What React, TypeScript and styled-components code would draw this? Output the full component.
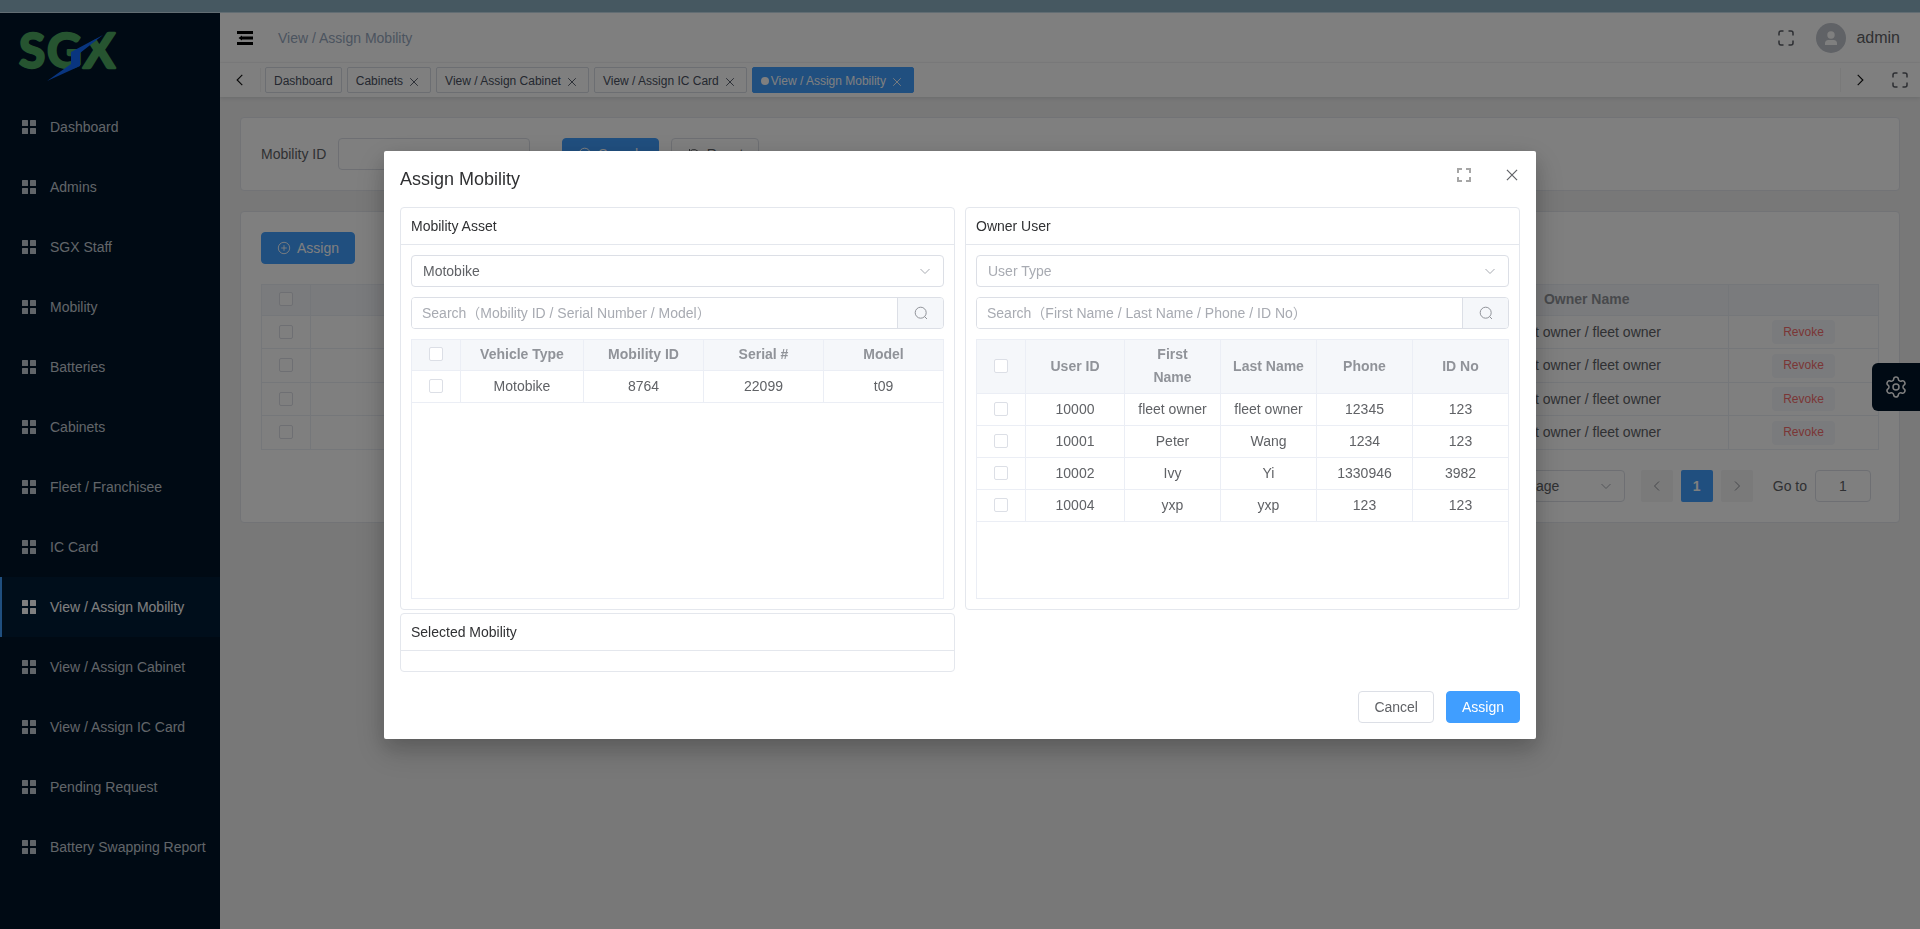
import React from 'react';
import styled, { createGlobalStyle, css } from 'styled-components';
import { Settings } from 'lucide-react';

const color = {
  primary: '#409eff',
  danger: '#f56c6c',
  title: '#303133',
  text: '#606266',
  muted: '#909399',
  placeholder: '#a8abb2',
  border: '#dcdfe6',
  line: '#ebeef5',
  fill: '#f5f7fa',
  page: '#f0f0f0',
  navy: '#001529',
};

const GlobalStyle = createGlobalStyle`
  *, *::before, *::after { box-sizing: border-box; }
  body {
    margin: 0;
    color: ${color.text};
    background: ${color.page};
    font-family: "Liberation Sans", "Noto Sans CJK SC", sans-serif;
    font-size: 14px;
  }
  button, input, select { font: inherit; color: inherit; }
  button { cursor: pointer; }
`;

/* ---------- Shell ---------- */

const Shell = styled.div`
  display: flex;
  flex-direction: column;
  min-height: 100vh;
`;

const TopStrip = styled.div`
  height: 13px;
  background: #8cb0c2;
  border-bottom: 1px solid #c4dbe6;
`;

const Body = styled.div`
  display: flex;
  flex: 1;
`;

const Sidebar = styled.aside`
  flex: 0 0 220px;
  background: ${color.navy};
`;

const LogoLink = styled.a`
  display: block;
  height: 84px;
  padding: 3px 0 0 15px;
`;

const NavLink = styled.a<{ $active?: boolean }>`
  display: flex;
  align-items: center;
  gap: 14px;
  height: 60px;
  padding-left: 20px;
  border-left: 2px solid ${(p) => (p.$active ? color.primary : 'transparent')};
  background: ${(p) => (p.$active ? '#011c37' : 'transparent')};
  color: ${(p) => (p.$active ? '#fff' : '#c3cad2')};
  text-decoration: none;
  white-space: nowrap;
`;

const Main = styled.div`
  display: flex;
  flex: 1;
  flex-direction: column;
  min-width: 0;
`;

const IconButton = styled.button<{ $size?: number }>`
  display: flex;
  align-items: center;
  justify-content: center;
  width: ${(p) => p.$size ?? 16}px;
  height: ${(p) => p.$size ?? 16}px;
  padding: 0;
  border: 0;
  background: none;
`;

const HeaderBar = styled.header`
  display: flex;
  align-items: center;
  height: 50px;
  padding: 0 20px 0 17px;
  border-bottom: 1px solid #f8f8f8;
  background: #fff;
`;

const Crumb = styled.span`
  flex: 1;
  margin-left: 25px;
  color: #97a8be;
`;

const Avatar = styled.span`
  display: flex;
  align-items: center;
  justify-content: center;
  width: 30px;
  height: 30px;
  margin: 0 10px 0 22px;
  border-radius: 50%;
  background: #c0c4cc;
`;

const UserName = styled.span`
  font-size: 16px;
`;

const TabBar = styled.nav`
  display: flex;
  align-items: center;
  height: 34px;
  background: #fff;
  box-shadow: 0 1px 4px rgba(0, 21, 41, 0.12);
`;

const TabEdge = styled.div<{ $side: 'left' | 'right' }>`
  display: flex;
  align-items: center;
  justify-content: space-between;
  height: 24px;
  ${(p) =>
    p.$side === 'left'
      ? 'width: 41px; padding-left: 12px; border-right: 1px solid #f2f2f2;'
      : 'width: 80px; padding: 0 12px 0 11px; border-left: 1px solid #f2f2f2;'}
`;

const TabList = styled.div`
  display: flex;
  flex: 1;
  gap: 5px;
  padding-left: 4px;
`;

const Tab = styled.a<{ $active?: boolean }>`
  display: flex;
  align-items: center;
  height: 26px;
  padding: 1px 8px 0;
  border: 1px solid ${(p) => (p.$active ? color.primary : '#d8dce5')};
  border-radius: 2px;
  background: ${(p) => (p.$active ? color.primary : '#fff')};
  color: ${(p) => (p.$active ? '#fff' : '#495060')};
  font-size: 12px;
  text-decoration: none;
  white-space: nowrap;
  svg { margin: 3px 2px 0 5px; }
`;

const TabDot = styled.span`
  width: 8px;
  height: 8px;
  margin-right: 2px;
  border-radius: 50%;
  background: #fff;
`;

const Content = styled.main`
  display: flex;
  flex-direction: column;
  gap: 20px;
  padding: 20px;
`;

const Card = styled.section`
  padding: 20px;
  border: 1px solid #e4e7ed;
  border-radius: 4px;
  background: #fff;
`;

/* ---------- Controls ---------- */

const Button = styled.button<{ $kind?: 'primary' | 'plain' }>`
  display: inline-flex;
  align-items: center;
  justify-content: center;
  gap: 6px;
  height: 32px;
  padding: 0 15px;
  border: 1px solid ${(p) => (p.$kind === 'primary' ? color.primary : color.border)};
  border-radius: 4px;
  background: ${(p) => (p.$kind === 'primary' ? color.primary : '#fff')};
  color: ${(p) => (p.$kind === 'primary' ? '#fff' : color.text)};
`;

const RevokeButton = styled.button`
  height: 24px;
  padding: 0 11px;
  border: 0;
  border-radius: 4px;
  background: ${color.fill};
  color: ${color.danger};
  font-size: 12px;
  vertical-align: middle;
`;

const fieldStyle = css`
  height: 32px;
  border: 1px solid ${color.border};
  border-radius: 4px;
  background: #fff;
  outline: none;
`;

const TextInput = styled.input<{ $width: number; $center?: boolean }>`
  ${fieldStyle}
  width: ${(p) => p.$width}px;
  padding: 0 11px;
  text-align: ${(p) => (p.$center ? 'center' : 'left')};
`;

const SelectBox = styled.div<{ $width?: number }>`
  position: relative;
  width: ${(p) => (p.$width ? `${p.$width}px` : '100%')};
  svg {
    position: absolute;
    top: 9px;
    right: 12px;
    pointer-events: none;
  }
`;

const Select = styled.select<{ $empty?: boolean }>`
  ${fieldStyle}
  appearance: none;
  display: block;
  width: 100%;
  padding: 0 11px;
  color: ${(p) => (p.$empty ? color.placeholder : color.text)};
`;

const SearchGroup = styled.div`
  display: flex;
  height: 32px;
  border: 1px solid ${color.border};
  border-radius: 4px;
  overflow: hidden;
`;

const SearchInput = styled.input`
  flex: 1;
  min-width: 0;
  padding: 0 10px;
  border: 0;
  outline: none;
  &::placeholder { color: ${color.placeholder}; opacity: 1; }
`;

const SearchButton = styled.button`
  display: flex;
  align-items: center;
  justify-content: center;
  width: 46px;
  padding: 0;
  border: 0;
  border-left: 1px solid ${color.border};
  background: ${color.fill};
`;

const Checkbox = styled.input.attrs({ type: 'checkbox' })`
  appearance: none;
  display: block;
  width: 14px;
  height: 14px;
  margin: 0 auto 1px;
  border: 1px solid ${color.border};
  border-radius: 2px;
  background: #fff;
  &:checked { background: ${color.primary}; }
`;

/* ---------- Table ---------- */

const TableFrame = styled.div<{ $height?: number }>`
  border: 1px solid ${color.line};
  ${(p) => (p.$height ? `height: ${p.$height}px;` : 'border-bottom: 0;')}
`;

const Table = styled.table<{ $head?: number; $airy?: boolean }>`
  width: 100%;
  table-layout: fixed;
  border-collapse: separate;
  border-spacing: 0;
  line-height: 23px;
  text-align: center;
  th, td {
    padding: 0 12px;
    border-right: 1px solid ${color.line};
    border-bottom: 1px solid ${color.line};
  }
  th { padding-bottom: 1px; }
  th:last-child, td:last-child { border-right: 0; }
  th:first-child, td:first-child { padding-left: 0; padding-right: 0; }
  th {
    height: ${(p) => p.$head ?? 31}px;
    background: ${color.fill};
    color: ${color.muted};
    font-weight: 700;
  }
  td { height: ${(p) => (p.$airy ? 33 : 32)}px; }
  tr:nth-child(even) td { height: ${(p) => (p.$airy ? 34 : 32)}px; }
`;

interface DataTableProps {
  name: string;
  columns: string[];
  widths: (number | undefined)[];
  rows: React.ReactNode[][];
  head?: number;
  airy?: boolean;
}

const DataTable = ({ name, columns, widths, rows, head, airy }: DataTableProps) => (
  <Table $head={head} $airy={airy} aria-label={name}>
    <colgroup>
      <col width={49} />
      {widths.map((w, i) => (
        <col key={i} width={w} />
      ))}
    </colgroup>
    <thead>
      <tr>
        <th>
          <Checkbox aria-label="Select all" />
        </th>
        {columns.map((c, i) => (
          <th key={i}>{c}</th>
        ))}
      </tr>
    </thead>
    <tbody>
      {rows.map((row, r) => (
        <tr key={r}>
          <td>
            <Checkbox aria-label={`Select row ${r + 1}`} />
          </td>
          {row.map((cell, i) => (
            <td key={i}>{cell}</td>
          ))}
        </tr>
      ))}
    </tbody>
  </Table>
);

/* ---------- Page parts ---------- */

const FilterRow = styled.form`
  display: flex;
  align-items: center;
  label { margin-right: 12px; }
  ${Button} { margin-left: 12px; }
  input + ${Button} { margin-left: 32px; }
`;

const Toolbar = styled.div`
  margin-bottom: 20px;
  line-height: 0;
`;

const Pagination = styled.div`
  display: flex;
  align-items: center;
  justify-content: flex-end;
  gap: 8px;
  padding: 20px 8px 0 0;
  label { margin-left: 12px; }
`;

const Total = styled.span`
  margin-right: 8px;
`;

const PageButton = styled.button<{ $current?: boolean }>`
  display: flex;
  align-items: center;
  justify-content: center;
  width: 32px;
  height: 32px;
  padding: 0;
  border: 0;
  border-radius: 2px;
  background: ${(p) => (p.$current ? color.primary : '#f4f4f5')};
  color: ${(p) => (p.$current ? '#fff' : color.muted)};
  font-weight: 700;
`;

const PageSize = styled.div`
  margin-right: 8px;
`;

const SettingsTab = styled.button`
  position: fixed;
  top: 363px;
  right: 0;
  display: flex;
  align-items: center;
  justify-content: center;
  width: 48px;
  height: 48px;
  padding: 0;
  border: 0;
  border-radius: 6px 0 0 6px;
  background: ${color.navy};
  color: #fff;
`;

/* ---------- Dialog ---------- */

const Overlay = styled.div`
  position: fixed;
  inset: 0;
  display: flex;
  align-items: flex-start;
  justify-content: center;
  padding-top: 151px;
  background: rgba(0, 0, 0, 0.5);
  overflow: auto;
`;

const Dialog = styled.div`
  width: 60%;
  border-radius: 2px;
  background: #fff;
  box-shadow: 0 12px 32px 4px rgba(0, 0, 0, 0.12), 0 8px 20px rgba(0, 0, 0, 0.16);
`;

const DialogHeader = styled.div`
  display: flex;
  height: 56px;
  padding-left: 16px;
`;

const DialogTitle = styled.h2`
  flex: 1;
  margin: 16px 0;
  color: ${color.title};
  font-size: 18px;
  font-weight: 400;
  line-height: 24px;
`;

const PanelGrid = styled.div`
  display: grid;
  grid-template-columns: 1fr 1fr;
  gap: 3px 10px;
  padding: 0 16px;
`;

const Panel = styled.section`
  border: 1px solid #e4e7ed;
  border-radius: 4px;
`;

const PanelTitle = styled.h3`
  margin: 0;
  padding: 0 10px;
  border-bottom: 1px solid #e4e7ed;
  color: ${color.title};
  font-size: 14px;
  font-weight: 400;
  line-height: 36px;
`;

const PanelBody = styled.div`
  display: flex;
  flex-direction: column;
  gap: 10px;
  padding: 10px;
`;

const DialogFooter = styled.div`
  display: flex;
  justify-content: flex-end;
  gap: 12px;
  padding: 19px 16px 16px;
`;

/* ---------- Icons ---------- */

const Logo = () => (
  <svg width="120" height="76" viewBox="15 16 120 76" role="img" aria-label="SGX">
    <g
      fill="#4ca860"
      stroke="#4ca860"
      strokeWidth="2.4"
      strokeLinejoin="round"
      fontFamily="Lato, sans-serif"
      fontWeight="700"
      fontSize="48"
    >
      <text x="19" y="68">S</text>
      <text x="47" y="68">G</text>
      <text x="83" y="68">X</text>
    </g>
    <path d="M81 30h20v6L82 47z" fill={color.navy} />
    <path d="M103 35 71 52v12L47 81l33-15V53z" fill="#126bff" />
  </svg>
);

const GridIcon = () => (
  <svg width="14" height="14" viewBox="0 0 14 14" fill="currentColor">
    <rect width="6" height="6" rx="0.5" />
    <rect x="8" width="6" height="6" rx="0.5" />
    <rect y="8" width="6" height="6" rx="0.5" />
    <rect x="8" y="8" width="6" height="6" rx="0.5" />
  </svg>
);

const FoldIcon = () => (
  <svg width="16" height="14" viewBox="0 0 16 14" fill="#000">
    <path d="M0 0h16v3H0zM5 5.500h11v3H5zM0 11h16v3H0zM1.500 7l3.500-2.500v5z" />
  </svg>
);

const ExpandIcon = () => (
  <svg width="16" height="16" viewBox="0 0 16 16" fill="none" stroke="#5a5e66" strokeWidth="1.5">
    <path d="M1 5.500V3a2 2 0 0 1 2-2h2.500M10.500 1H13a2 2 0 0 1 2 2v2.500M15 10.500V13a2 2 0 0 1-2 2h-2.500M5.500 15H3a2 2 0 0 1-2-2v-2.500" />
  </svg>
);

const SquareExpandIcon = () => (
  <svg width="14" height="14" viewBox="0 0 14 14" fill="none" stroke="#a6a6a6" strokeWidth="2">
    <path d="M1 5V1h4M9 1h4v4M13 9v4H9M5 13H1V9" />
  </svg>
);

const CrossIcon = ({ size = 12 }: { size?: number }) => (
  <svg width={size} height={size} viewBox="0 0 12 12" fill="none" stroke="currentColor" strokeWidth="0.9">
    <path d="M2.200 2.200l7.600 7.600M9.800 2.200l-7.600 7.600" />
  </svg>
);

const Chevron = ({ dir, stroke = 'currentColor', size = 14 }: {
  dir: 'left' | 'right' | 'down';
  stroke?: string;
  size?: number;
}) => {
  const d = { left: 'M9 2.500 4.500 7 9 11.500', right: 'M5 2.500 9.500 7 5 11.500', down: 'M2.500 5 7 9.500 11.500 5' }[dir];
  return (
    <svg width={size} height={size} viewBox="0 0 14 14" fill="none" stroke={stroke}>
      <path d={d} />
    </svg>
  );
};

const SearchIcon = ({ stroke = 'currentColor' }: { stroke?: string }) => (
  <svg width="14" height="14" viewBox="0 0 14 14" fill="none" stroke={stroke}>
    <circle cx="6.700" cy="6.700" r="5.500" />
    <path d="M10.500 10.500 13 13" />
  </svg>
);

const PlusCircleIcon = () => (
  <svg width="14" height="14" viewBox="0 0 14 14" fill="none" stroke="currentColor" strokeWidth="0.9">
    <circle cx="7" cy="7" r="5.700" />
    <path d="M7 4.200v5.600M4.200 7h5.600" />
  </svg>
);

const RefreshIcon = () => (
  <svg width="14" height="14" viewBox="0 0 14 14" fill="none" stroke="currentColor">
    <path d="M2.500 2v3h3M2.800 4.800A5 5 0 0 1 12 7M11.500 12V9h-3M11.200 9.200A5 5 0 0 1 2 7" />
  </svg>
);

const PersonIcon = () => (
  <svg width="14" height="14" viewBox="0 0 14 14" fill="#fff">
    <circle cx="7" cy="4" r="3.700" />
    <path d="M1 14v-1.500A3.500 3.500 0 0 1 4.500 9h5a3.500 3.500 0 0 1 3.500 3.500V14z" />
  </svg>
);

/* ---------- Data ---------- */

const menu = [
  'Dashboard',
  'Admins',
  'SGX Staff',
  'Mobility',
  'Batteries',
  'Cabinets',
  'Fleet / Franchisee',
  'IC Card',
  'View / Assign Mobility',
  'View / Assign Cabinet',
  'View / Assign IC Card',
  'Pending Request',
  'Battery Swapping Report',
];

const currentPage = 'View / Assign Mobility';

const openTabs = ['Dashboard', 'Cabinets', 'View / Assign Cabinet', 'View / Assign IC Card', currentPage];

const assignedRows = [1, 2, 3, 4].map(() => [
  '',
  '',
  '',
  '',
  'fleet owner / fleet owner',
  <RevokeButton key="revoke">Revoke</RevokeButton>,
]);

const users = [
  ['10000', 'fleet owner', 'fleet owner', '12345', '123'],
  ['10001', 'Peter', 'Wang', '1234', '123'],
  ['10002', 'Ivy', 'Yi', '1330946', '3982'],
  ['10004', 'yxp', 'yxp', '123', '123'],
];

/* ---------- App ---------- */

const AssignDialog = () => (
  <Overlay>
    <Dialog role="dialog" aria-modal="true" aria-labelledby="dialog-title">
      <DialogHeader>
        <DialogTitle id="dialog-title">Assign Mobility</DialogTitle>
        <IconButton $size={48} aria-label="Full screen">
          <SquareExpandIcon />
        </IconButton>
        <IconButton $size={48} aria-label="Close">
          <CrossIcon size={16} />
        </IconButton>
      </DialogHeader>
      <PanelGrid>
        <Panel>
          <PanelTitle>Mobility Asset</PanelTitle>
          <PanelBody>
            <SelectBox>
              <Select aria-label="Vehicle type" defaultValue="Motobike">
                <option>Motobike</option>
              </Select>
              <Chevron dir="down" stroke={color.placeholder} />
            </SelectBox>
            <SearchGroup>
              <SearchInput aria-label="Search mobility" placeholder="Search（Mobility ID / Serial Number / Model）" />
              <SearchButton aria-label="Search">
                <SearchIcon stroke={color.muted} />
              </SearchButton>
            </SearchGroup>
            <TableFrame $height={260}>
              <DataTable
                name="Mobility assets"
                columns={['Vehicle Type', 'Mobility ID', 'Serial #', 'Model']}
                widths={[123, 120, 120, undefined]}
                rows={[['Motobike', '8764', '22099', 't09']]}
              />
            </TableFrame>
          </PanelBody>
        </Panel>
        <Panel>
          <PanelTitle>Owner User</PanelTitle>
          <PanelBody>
            <SelectBox>
              <Select aria-label="User type" $empty defaultValue="">
                <option value="">User Type</option>
              </Select>
              <Chevron dir="down" stroke={color.placeholder} />
            </SelectBox>
            <SearchGroup>
              <SearchInput aria-label="Search users" placeholder="Search（First Name / Last Name / Phone / ID No）" />
              <SearchButton aria-label="Search">
                <SearchIcon stroke={color.muted} />
              </SearchButton>
            </SearchGroup>
            <TableFrame $height={260}>
              <DataTable
                name="Owner users"
                columns={['User ID', 'First Name', 'Last Name', 'Phone', 'ID No']}
                widths={[99, 96, 96, 96, undefined]}
                head={54}
                rows={users}
              />
            </TableFrame>
          </PanelBody>
        </Panel>
        <Panel>
          <PanelTitle>Selected Mobility</PanelTitle>
          <PanelBody />
        </Panel>
      </PanelGrid>
      <DialogFooter>
        <Button>Cancel</Button>
        <Button $kind="primary">Assign</Button>
      </DialogFooter>
    </Dialog>
  </Overlay>
);

export default function App() {
  return (
    <>
      <GlobalStyle />
      <Shell>
        <TopStrip />
        <Body>
          <Sidebar>
            <LogoLink href="#home">
              <Logo />
            </LogoLink>
            <nav aria-label="Main menu">
              {menu.map((item) => (
                <NavLink key={item} href="#menu" $active={item === currentPage}>
                  <GridIcon />
                  {item}
                </NavLink>
              ))}
            </nav>
          </Sidebar>
          <Main>
            <HeaderBar>
              <IconButton aria-label="Collapse menu">
                <FoldIcon />
              </IconButton>
              <Crumb>{currentPage}</Crumb>
              <IconButton aria-label="Full screen">
                <ExpandIcon />
              </IconButton>
              <Avatar>
                <PersonIcon />
              </Avatar>
              <UserName>admin</UserName>
            </HeaderBar>
            <TabBar aria-label="Open pages">
              <TabEdge $side="left">
                <IconButton aria-label="Scroll tabs left">
                  <Chevron dir="left" stroke="#111" size={18} />
                </IconButton>
              </TabEdge>
              <TabList>
                {openTabs.map((tab, i) => (
                  <Tab key={tab} href="#tab" $active={tab === currentPage}>
                    {tab === currentPage && <TabDot />}
                    {tab}
                    {i > 0 && <CrossIcon />}
                  </Tab>
                ))}
              </TabList>
              <TabEdge $side="right">
                <IconButton aria-label="Scroll tabs right">
                  <Chevron dir="right" stroke="#111" size={18} />
                </IconButton>
                <IconButton aria-label="Full screen content">
                  <ExpandIcon />
                </IconButton>
              </TabEdge>
            </TabBar>
            <Content>
              <Card>
                <FilterRow>
                  <label htmlFor="mobility-id">Mobility ID</label>
                  <TextInput id="mobility-id" $width={192} />
                  <Button type="button" $kind="primary">
                    <SearchIcon />
                    Search
                  </Button>
                  <Button type="button">
                    <RefreshIcon />
                    Reset
                  </Button>
                </FilterRow>
              </Card>
              <Card>
                <Toolbar>
                  <Button $kind="primary">
                    <PlusCircleIcon />
                    Assign
                  </Button>
                </Toolbar>
                <TableFrame>
                  <DataTable
                    name="Assigned mobility"
                    columns={['', '', '', '', 'Owner Name', '']}
                    widths={[undefined, undefined, undefined, undefined, undefined, 149]}
                    rows={assignedRows}
                    airy
                  />
                </TableFrame>
                <Pagination>
                  <Total>Total 4</Total>
                  <PageSize>
                    <SelectBox $width={128}>
                      <Select aria-label="Page size" defaultValue="10/page">
                        <option>10/page</option>
                      </Select>
                      <Chevron dir="down" stroke={color.placeholder} />
                    </SelectBox>
                  </PageSize>
                  <PageButton aria-label="Previous page">
                    <Chevron dir="left" />
                  </PageButton>
                  <PageButton $current>1</PageButton>
                  <PageButton aria-label="Next page">
                    <Chevron dir="right" />
                  </PageButton>
                  <label htmlFor="goto-page">Go to</label>
                  <TextInput id="goto-page" $width={56} $center defaultValue="1" />
                </Pagination>
              </Card>
            </Content>
          </Main>
        </Body>
      </Shell>
      <SettingsTab aria-label="Settings">
        <Settings size={24} strokeWidth={1.5} />
      </SettingsTab>
      <AssignDialog />
    </>
  );
}
